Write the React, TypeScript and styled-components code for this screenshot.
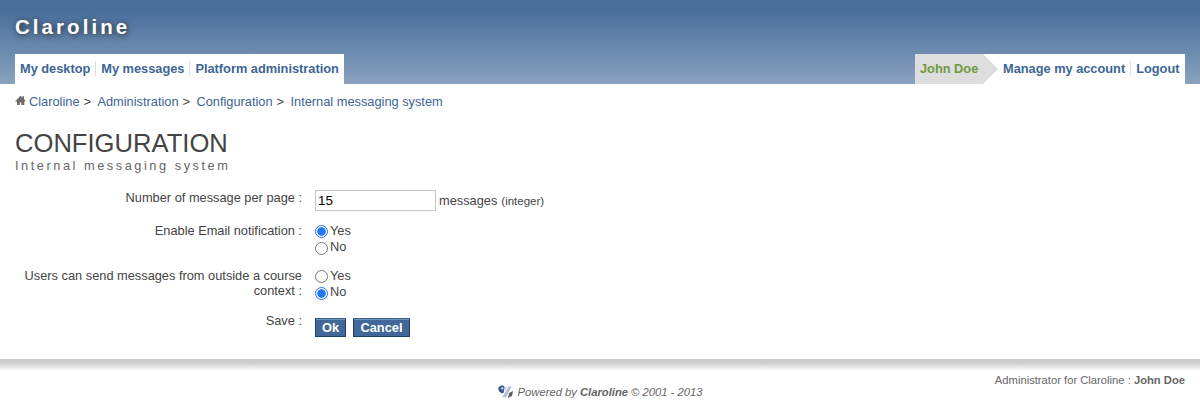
import React from "react";
import styled, { createGlobalStyle } from "styled-components";

const GlobalStyle = createGlobalStyle`
  *, *::before, *::after { box-sizing: border-box; }
  body {
    margin: 0;
    background: #fff;
    color: #444;
    font: 12.8px/15px "Liberation Sans", Arial, sans-serif;
  }
`;

const Header = styled.header`
  display: flex;
  flex-direction: column;
  justify-content: space-between;
  height: 84px;
  padding: 15px 15px 0;
  background: linear-gradient(#486e9c 0, #486e9c 10px, #8aa2bf 100%);
`;

const Brand = styled.div`
  color: #fff;
  font-size: 20.48px;
  line-height: 24px;
  font-weight: bold;
  letter-spacing: 3.07px;
  text-shadow: 1px 1px 6px #222;
`;

const NavRow = styled.div`
  display: flex;
  justify-content: space-between;
`;

const Tabs = styled.nav<{ $width: number }>`
  display: flex;
  align-items: center;
  width: ${(p) => p.$width}px;
  height: 30px;
  background: #fff;
`;

const Tab = styled.a<{ $divided?: boolean }>`
  margin-bottom: 1px;
  padding: 0 5px;
  border-left: ${(p) => (p.$divided ? "1px solid #ddd" : "0")};
  color: #3d6595;
  font-weight: bold;
  letter-spacing: -0.01px;
  white-space: nowrap;
`;

const UserName = styled.span`
  width: 68px;
  height: 30px;
  padding-left: 5px;
  background: #ddd;
  color: #6f9a3f;
  font-weight: bold;
  line-height: 30px;
  white-space: nowrap;
`;

const Arrow = styled.svg`
  display: block;
  flex: none;
  width: 15px;
  height: 30px;
`;

const Crumbs = styled.nav`
  display: flex;
  align-items: center;
  height: 15px;
  margin: 10px 15px 0;
`;

const Crumb = styled.a`
  color: #3d6595;
`;

const Separator = styled.span`
  margin: 0 6.45px 0 4px;
  font-size: 12.8px;
`;

const HomeIcon = styled.svg`
  width: 11px;
  height: 11px;
  margin: 0 3px 2px 0;
`;

const Title = styled.h1`
  margin: 19px 15px 0;
  font-size: 25.6px;
  font-weight: normal;
  line-height: 30px;
  text-transform: uppercase;
`;

const Subtitle = styled.h2`
  margin: 0 15px;
  color: #666;
  font-size: 12.8px;
  font-weight: normal;
  line-height: 15px;
  letter-spacing: 2.53px;
`;

const Form = styled.form`
  margin: 17px 15px 0;
`;

const Row = styled.div<{ $height: number }>`
  display: grid;
  grid-template-columns: 287px 1fr;
  column-gap: 13px;
  height: ${(p) => p.$height}px;
`;

const Label = styled.div`
  text-align: right;
`;

const Field = styled.div`
  display: flex;
  align-items: center;
  height: 21px;
`;

const TextInput = styled.input`
  width: 121px;
  height: 21px;
  margin: 0 3px 0 0;
  padding: 1px 2px;
  border: 1px solid #c4c4c4;
  background: #fff;
  color: #000;
  font: 13.33px "Liberation Sans", Arial, sans-serif;
`;

const Hint = styled.small`
  margin: 1px 0 0 4px;
  font-size: 11.5px;
`;

const Option = styled.label`
  display: flex;
  height: 16px;
`;

const Radio = styled.input`
  appearance: none;
  width: 13px;
  height: 13px;
  margin: 2px 2px 0 0;
  border: 1px solid #767676;
  border-radius: 50%;
  background: #fff;

  &:checked {
    border-color: #2376f8;
    background: radial-gradient(circle, #2376f8 3.9px, #fff 4.6px);
  }

  ${Option} + ${Option} & {
    margin-top: 3px;
  }
`;

const Actions = styled.div`
  display: flex;
  gap: 7px;
  padding-top: 5px;
`;

const Button = styled.button<{ $width: number }>`
  width: ${(p) => p.$width}px;
  height: 19px;
  padding: 0;
  border: 1px solid #1f3f6b;
  border-top-color: #355f92;
  background: #426899;
  box-shadow: inset 0 1px #6f93bd;
  color: #fff;
  font: bold 12.8px/17px "Liberation Sans", Arial, sans-serif;
`;

const Footer = styled.footer`
  height: 54px;
  padding: 14px 15px 0;
  background: linear-gradient(#c9c9c9, #d0d0d0 4px, #fff 12px);
  color: #666;
  font-size: 11.23px;
  line-height: 14px;
`;

const Manager = styled.div`
  text-align: right;
`;

const Powered = styled.div`
  display: flex;
  align-items: center;
  justify-content: center;
  margin-top: -2px;
  font-style: italic;
`;

const Logo = styled.svg`
  width: 16px;
  height: 14px;
  margin-right: 4px;
`;

const Choice = ({ name, yes }: { name: string; yes: boolean }) => (
  <div>
    <Option><Radio type="radio" name={name} defaultChecked={yes} />Yes</Option>
    <Option><Radio type="radio" name={name} defaultChecked={!yes} />No</Option>
  </div>
);

export default function App() {
  return (
    <>
      <GlobalStyle />
      <Header>
        <Brand>Claroline</Brand>
        <NavRow>
          <Tabs $width={329}>
            <Tab>My desktop</Tab>
            <Tab $divided>My messages</Tab>
            <Tab $divided>Platform administration</Tab>
          </Tabs>
          <Tabs $width={270}>
            <UserName>John Doe</UserName>
            <Arrow viewBox="0 0 15 30">
              <path d="M0 0 15 15 0 30Z" fill="#ddd" />
            </Arrow>
            <Tab>Manage my account</Tab>
            <Tab $divided>Logout</Tab>
          </Tabs>
        </NavRow>
      </Header>
      <Crumbs>
        <HomeIcon viewBox="0 0 11 11">
          <path d="M5.5.8 7.4 2.5V1.2H9v2.9l1.6 2-.7.7L9.3 6.3V10H6.3V7.5H4.8V10H2V6.3l-1 .6-.7-.7Z" fill="#736b66" />
        </HomeIcon>
        <Crumb>Claroline</Crumb><Separator>&gt;</Separator>
        <Crumb>Administration</Crumb><Separator>&gt;</Separator>
        <Crumb>Configuration</Crumb><Separator>&gt;</Separator>
        <Crumb>Internal messaging system</Crumb>
      </Crumbs>
      <Title>Configuration</Title>
      <Subtitle>Internal messaging system</Subtitle>
      <Form>
        <Row $height={33}>
          <Label>Number of message per page :</Label>
          <Field>
            <TextInput defaultValue="15" />
            messages<Hint>(integer)</Hint>
          </Field>
        </Row>
        <Row $height={45}>
          <Label>Enable Email notification :</Label>
          <Choice name="email" yes />
        </Row>
        <Row $height={45}>
          <Label>Users can send messages from outside a course context :</Label>
          <Choice name="outside" yes={false} />
        </Row>
        <Row $height={46}>
          <Label>Save :</Label>
          <Actions>
            <Button type="button" $width={31}>Ok</Button>
            <Button type="button" $width={57}>Cancel</Button>
          </Actions>
        </Row>
      </Form>
      <Footer>
        <Manager>Administrator for Claroline : <b>John Doe</b></Manager>
        <Powered>
          <Logo viewBox="0 0 16 14">
            <path d="M1 2C3 0 7 0 6.5 3L5.5 8C2 9-1 5 1 2Z" fill="#34558e" />
            <path d="M2.5 3 5 1.5 5.5 4 4 5Z" fill="#b9c8df" />
            <path d="M11 1 13.5 1.5 8 12.5 4.5 12Z" fill="#b4bfce" />
            <path d="M7 2 9.5 1 8 6 6.5 7Z" fill="#d5dce7" />
            <path d="M11 8 15 6 14 11 10 13Z" fill="#5b5f67" />
          </Logo>
          <span>Powered by <b>Claroline</b> © 2001 - 2013</span>
        </Powered>
      </Footer>
    </>
  );
}
